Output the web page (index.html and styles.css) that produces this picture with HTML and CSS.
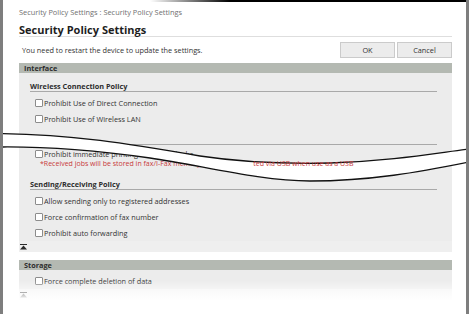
FILE: index.html
```html
<!DOCTYPE html>
<html lang="en">
<head>
<meta charset="utf-8">
<title>Security Policy Settings</title>
<link rel="stylesheet" href="styles.css">
</head>
<body>
<div class="frame">
  <div class="page">
    <div class="crumb">Security Policy Settings : Security Policy Settings</div>
    <h1 class="title">Security Policy Settings</h1>
    <div class="msgrow">
      <span class="msg">You need to restart the device to update the settings.</span>
      <div class="btns">
        <button class="btn" type="button">OK</button>
        <button class="btn" type="button">Cancel</button>
      </div>
    </div>

    <section class="sect">
      <div class="bar">Interface</div>
      <div class="panel">
        <div class="group">
          <div class="ghead">Wireless Connection Policy</div>
          <div class="row"><span class="cb"></span>Prohibit Use of Direct Connection</div>
          <div class="row"><span class="cb"></span>Prohibit Use of Wireless LAN</div>
        </div>
        <div class="group">
          <div class="ghead">&nbsp;</div>
          <div class="row tight"><span class="cb"></span>Prohibit immediate printing of received jobs
            <div class="note">*Received jobs will be stored in fax/I-Fax memory and can be prin<span class="peek">ted via USB when use as a USB</span></div>
          </div>
        </div>
        <div class="group">
          <div class="ghead">Sending/Receiving Policy</div>
          <div class="row"><span class="cb"></span>Allow sending only to registered addresses</div>
          <div class="row"><span class="cb"></span>Force confirmation of fax number</div>
          <div class="row"><span class="cb"></span>Prohibit auto forwarding</div>
        </div>
        <div class="toprow"><svg class="topicon" width="7" height="6" viewBox="0 0 7 6"><rect x="0" y="0" width="7" height="1" fill="#2b2b2b"/><path d="M3.5 1.5 L7 5.5 L0 5.5 Z" fill="#2b2b2b"/></svg></div>
      </div>
    </section>

    <section class="sect storage">
      <div class="bar">Storage</div>
      <div class="panel">
        <div class="row"><span class="cb"></span>Force complete deletion of data</div>
        <div class="toprow"><svg class="topicon" width="7" height="6" viewBox="0 0 7 6"><rect x="0" y="0" width="7" height="1" fill="#2b2b2b"/><path d="M3.5 1.5 L7 5.5 L0 5.5 Z" fill="#2b2b2b"/></svg></div>
      </div>
    </section>
  </div>

  <svg class="tear" width="469" height="314" viewBox="0 0 469 314">
    <path d="M-4,133.5 L0,133.5 C70,134 130,144 200,156 C240,162 290,164 330,163 C390,161 430,154 469,149 L474,148.5 L474,161.5 L469,162 C420,172 370,181 310,181 C260,181 200,165 150,158 C100,151 50,146.5 0,147 L-4,147 Z" fill="#ffffff"/>
    <path d="M-4,133.5 L0,133.5 C70,134 130,144 200,156 C240,162 290,164 330,163 C390,161 430,154 469,149 L474,148.5" fill="none" stroke="#111" stroke-width="1.3"/>
    <path d="M-4,147 L0,147 C50,146.5 100,151 150,158 C200,165 260,181 310,181 C370,181 420,172 469,162 L474,161.5" fill="none" stroke="#111" stroke-width="1.3"/>
  </svg>
  <div class="fade"></div>
</div>
</body>
</html>
```

FILE: styles.css
```css
html, body {
  margin: 0;
  padding: 0;
  background: #ffffff;
}

.frame {
  position: relative;
  width: 469px;
  height: 314px;
  box-sizing: border-box;
  border-left: 3px solid #7e7e7e;
  border-right: 3px solid #7e7e7e;
  overflow: hidden;
  font-family: "Open Sans", "Noto Sans", sans-serif;
  font-size: 7.3px;
  color: #333333;
}

.frame::before {
  content: "";
  position: absolute;
  top: 0;
  left: -3px;
  right: -3px;
  height: 2px;
  background: linear-gradient(to right, rgba(0,0,0,0) 0, rgba(0,0,0,0) 150px, #000 230px, #000 100%);
  z-index: 5;
}

.page {
  padding: 7px 14px 0 16px;
}

.crumb {
  line-height: 10px;
  color: #707070;
  font-size: 7.4px;
}

.title {
  margin: 6px 0 0 0;
  font-size: 11px;
  line-height: 13px;
  font-weight: 700;
  color: #1e1e1e;
  border-bottom: 1px solid #dedede;
}

.msgrow {
  margin-top: 5px;
  height: 16px;
  display: flex;
  align-items: center;
  justify-content: space-between;
}

.msg {
  padding-left: 3px;
  color: #333;
}

.btns {
  display: flex;
  gap: 2px;
}

.btn {
  width: 55px;
  height: 16px;
  margin: 0;
  padding: 0;
  box-sizing: border-box;
  border: 1px solid #cbcbcb;
  background: #ececec;
  font-family: inherit;
  font-size: 7.3px;
  color: #333;
  line-height: 14px;
}

.sect {
  margin-top: 5px;
}

.storage {
  margin-top: 8px;
}

.bar {
  height: 10px;
  line-height: 10px;
  background: #b4b9b2;
  font-weight: 700;
  padding-left: 5px;
  color: #2e2e2e;
}

.panel {
  background: #ececec;
  padding-top: 3px;
}

.group {
  padding: 0 15px 0 11px;
}

.ghead {
  margin-top: 5px;
  margin-bottom: 3px;
  line-height: 10px;
  font-weight: 700;
  color: #2e2e2e;
  border-bottom: 1px solid #a9a9a9;
}

.group + .group .ghead {
  margin-top: 7px;
}

.group + .group + .group .ghead {
  margin-top: 8px;
}

.row {
  padding: 3px 0 3px 5px;
  line-height: 10px;
  display: block;
}

.storage .row {
  padding-left: 16px;
}

.tight {
  padding-top: 1px;
}

.cb {
  display: inline-block;
  width: 6px;
  height: 6px;
  border: 1px solid #8c8c8c;
  border-radius: 1px;
  background: #ffffff;
  vertical-align: -1px;
  margin-right: 1px;
}

.note {
  padding-left: 5px;
  line-height: 9px;
  font-size: 7px;
  color: #c83a3a;
}

.peek {
  position: relative;
  z-index: 3;
}

.toprow {
  height: 11px;
  background: #efefef;
  padding-left: 1px;
  display: flex;
  align-items: center;
}

.storage .toprow {
  background: #f3f3f3;
}

.topicon {
  display: block;
}

.tear {
  position: absolute;
  top: 0;
  left: -3px;
  z-index: 2;
}

.fade {
  position: absolute;
  left: -3px;
  right: -3px;
  top: 280px;
  height: 34px;
  background: linear-gradient(to bottom, rgba(255,255,255,0) 0, rgba(255,255,255,0.85) 50%, #fff 70%);
  z-index: 4;
}
```
